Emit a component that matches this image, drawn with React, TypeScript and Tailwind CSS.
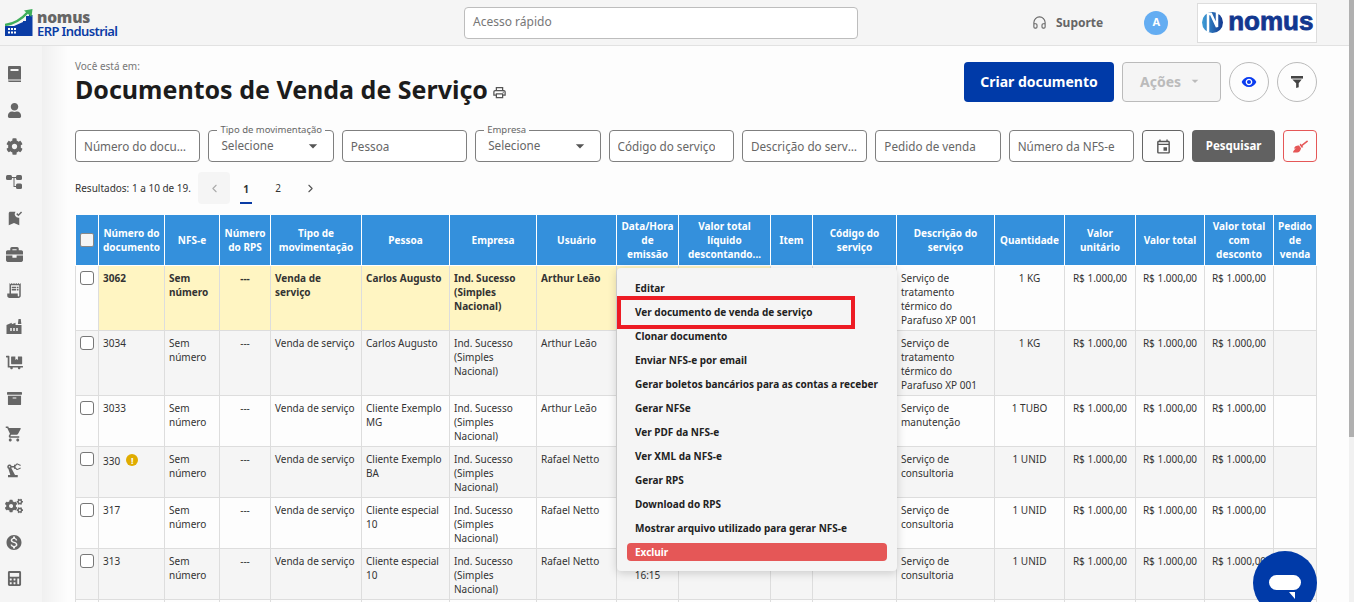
import { ChevronLeft, ChevronRight, Headphones } from 'lucide-react';
import {
  FaArchive, FaBriefcase, FaBroom, FaCalculator, FaCog, FaCogs, FaDollyFlatbed, FaUser,
} from 'react-icons/fa';
import {
  MdArrowDropDown, MdBookmarkAdded, MdFactory, MdMonetizationOn, MdOutlineEvent, MdOutlinePrint,
  MdPrecisionManufacturing, MdReceiptLong, MdShoppingCart, MdVisibility,
} from 'react-icons/md';

function BookIcon() {
  return (
    <svg width="13" height="17" viewBox="0 0 13 17" fill="currentColor">
      <path d="M1 0h11a1 1 0 0 1 1 1v12.500H0V1a1 1 0 0 1 1-1z" />
      <rect x="2.500" y="3" width="8" height="2" fill="#f5f5f5" />
      <path d="M0 14.500h13V16H1.500A1.500 1.500 0 0 1 0 14.500z" />
    </svg>
  );
}

function TreeIcon() {
  return (
    <svg width="16" height="14" viewBox="0 0 16 14" fill="currentColor">
      <rect x="0" y="0" width="6" height="5" rx="1.500" />
      <rect x="10" y="0" width="6" height="5" rx="1.500" />
      <rect x="10" y="8.500" width="6" height="5.500" rx="1.500" />
      <path d="M5 2h6v1H8.500v8H11v1H7.500V3H5z" />
    </svg>
  );
}

const sideIcons = [
  <BookIcon key="a" />, <FaUser key="b" size={15} />, <FaCog key="c" size={17} />,
  <TreeIcon key="d" />, <MdBookmarkAdded key="e" size={19} />,
  <FaBriefcase key="f" size={17} />, <MdReceiptLong key="g" size={19} />, <MdFactory key="h" size={19} />,
  <FaDollyFlatbed key="i" size={17} />, <FaArchive key="j" size={15} />, <MdShoppingCart key="k" size={20} />,
  <MdPrecisionManufacturing key="l" size={19} />, <FaCogs key="m" size={18} />, <MdMonetizationOn key="n" size={19} />,
  <FaCalculator key="o" size={15} />,
];

const widths = [24, 66, 55, 51, 91, 88, 87, 80, 62, 92, 42, 84, 98, 70, 71, 69, 69, 43];

const headers = [
  'Número do documento', 'NFS-e', 'Número do RPS', 'Tipo de movimentação', 'Pessoa', 'Empresa', 'Usuário',
  'Data/Hora de emissão', 'Valor total líquido descontando...', 'Item', 'Código do serviço', 'Descrição do serviço',
  'Quantidade', 'Valor unitário', 'Valor total', 'Valor total com desconto', 'Pedido de venda',
];

const tratamento = 'Serviço de tratamento térmico do Parafuso XP 001';

const rows = [
  { num: '3062', tipo: 'Venda de serviço', pessoa: 'Carlos Augusto', user: 'Arthur Leão', desc: tratamento, qtd: '1 KG', h: 'h-[65px]', hi: true },
  { num: '3034', tipo: 'Venda de serviço', pessoa: 'Carlos Augusto', user: 'Arthur Leão', desc: tratamento, qtd: '1 KG', h: 'h-[65px]' },
  { num: '3033', tipo: 'Venda de serviço', pessoa: 'Cliente Exemplo MG', user: 'Arthur Leão', desc: 'Serviço de manutenção', qtd: '1 TUBO', h: 'h-[51px]' },
  { num: '330', tipo: 'Venda de serviço', pessoa: 'Cliente Exemplo BA', user: 'Rafael Netto', desc: 'Serviço de consultoria', qtd: '1 UNID', h: 'h-[51px]', warn: true },
  { num: '317', tipo: 'Venda de serviço', pessoa: 'Cliente especial 10', user: 'Rafael Netto', desc: 'Serviço de consultoria', qtd: '1 UNID', h: 'h-[51px]' },
  { num: '313', tipo: 'Venda de serviço', pessoa: 'Cliente especial 10', user: 'Rafael Netto', desc: 'Serviço de consultoria', qtd: '1 UNID', h: 'h-[51px]', hora: '16:15' },
];

const menuItems = [
  'Editar', 'Ver documento de venda de serviço', 'Clonar documento', 'Enviar NFS-e por email',
  'Gerar boletos bancários para as contas a receber', 'Gerar NFSe', 'Ver PDF da NFS-e', 'Ver XML da NFS-e',
  'Gerar RPS', 'Download do RPS', 'Mostrar arquivo utilizado para gerar NFS-e',
];

function Field({ text }: { text: string }) {
  return (
    <div className="flex h-8 w-[125.4px] shrink-0 items-center rounded border border-[#7f7f7f] bg-white px-2 pt-px text-[11.7px] text-[#666]">
      <span className="truncate">{text}</span>
    </div>
  );
}

function SelectField({ label }: { label: string }) {
  return (
    <div className="relative flex h-8 w-[125.4px] shrink-0 items-center justify-between rounded border border-[#7f7f7f] bg-white pr-[10px] pl-[12px] text-[11.7px] text-[#666]">
      <span className="absolute -top-[7px] left-[8px] bg-[#fdfdfd] px-[3px] text-[9.5px] leading-[12px]">{label}</span>
      <span>Selecione</span>
      <MdArrowDropDown size={20} className="text-[#555]" />
    </div>
  );
}

function Cell({ children, bg, bold, center }: { children?: React.ReactNode; bg: string; bold?: boolean; center?: boolean }) {
  return (
    <td className={`border-r border-b border-[#dddddd] px-[4px] pt-[5px] align-top leading-[14px] ${bg} ${bold ? 'font-bold' : ''} ${center ? 'text-center' : ''}`}>
      {children}
    </td>
  );
}

export default function App() {
  return (
    <div className="flex h-[602px] w-[1354px] overflow-hidden bg-[#fdfdfd] font-['Noto_Sans',sans-serif] text-[#333]">
      <div className="relative w-[1349px] shrink-0">
        <header className="flex h-[46px] items-center border-b border-[#e2e2e2] bg-[#f5f5f5]">
          <div className="flex w-[464px] items-center pl-[5px]">
            <svg width="28" height="28" viewBox="0 0 28 28">
              <path d="M0 17h9l9-4v-1h3V7h3v-1h3.500v21H0z" fill="#0a3ca5" />
              <path d="M0 16C9 15 16 11 23 3" fill="none" stroke="#3fae5a" strokeWidth="2.500" />
              <path d="M19 1.500L27.500 0 26.500 8z" fill="#3fae5a" />
              <g fill="#fff">
                <rect x="3" y="19" width="2" height="2" /><rect x="6" y="19" width="2" height="2" /><rect x="9" y="19" width="2" height="2" />
                <rect x="3" y="22.500" width="2" height="2" /><rect x="6" y="22.500" width="2" height="2" /><rect x="9" y="22.500" width="2" height="2" />
              </g>
            </svg>
            <div className="mt-[2px] ml-[4px] flex flex-col">
              <span className="text-[15.5px] leading-[14px] font-black tracking-[-0.2px] text-[#666]">nomus</span>
              <span className="text-[13px] leading-[14px] font-semibold tracking-[-0.6px] text-[#0a3ca5]">ERP Industrial</span>
            </div>
          </div>
          <div className="flex h-8 w-[394px] items-center rounded border border-[#bdbdbd] bg-white px-[8px] pb-px text-[12px] text-[#777]">Acesso rápido</div>
          <div className="ml-[174px] flex items-center gap-[9px] text-[12px] font-bold text-[#666]">
            <Headphones size={15} strokeWidth={1.75} />
            <span>Suporte</span>
          </div>
          <div className="ml-[41px] flex h-6 w-6 items-center justify-center rounded-full bg-[#64adf2] text-[11px] font-bold text-white">A</div>
          <div className="ml-[29px] flex h-10 w-[120px] items-center gap-[5px] border border-[#dddddd] bg-white pl-[4px]">
            <svg width="21" height="21" viewBox="0 0 21 21">
              <defs>
                <linearGradient id="nomusMark" x1="0" x2="1" y1="0" y2="0">
                  <stop offset="0" stopColor="#3f9fd8" />
                  <stop offset="1" stopColor="#12378f" />
                </linearGradient>
              </defs>
              <circle cx="10.500" cy="10.500" r="10.500" fill="url(#nomusMark)" />
              <path d="M6 20V2h3l6 13V1h3" fill="none" stroke="#fff" strokeWidth="2.500" />
            </svg>
            <span className="-mt-[3px] font-['Liberation_Sans',sans-serif] text-[26px] leading-none font-bold text-[#12378f] [-webkit-text-stroke:0.8px_#12378f]">nomus</span>
          </div>
        </header>

        <div className="flex h-[556px]">
          <aside className="flex w-[42px] shrink-0 flex-col items-center gap-[18px] bg-[#f5f5f5] pt-[19px] pr-[14px] text-[#666]">
            {sideIcons.map((icon, i) => (
              <div key={i} className="flex h-[18px] w-[18px] shrink-0 items-center justify-center">{icon}</div>
            ))}
          </aside>

          <main className="min-w-0 flex-1 bg-[linear-gradient(to_right,#f0f0f0,#fdfdfd_26px)] pt-[14px] pr-[32px] pl-[33px]">
            <div className="flex h-[42px] items-start justify-between">
              <div>
                <div className="text-[10px] leading-[12px] text-[#777]">Você está em:</div>
                <div className="flex items-center gap-[4px]">
                  <h1 className="text-[25px] leading-[34px] font-bold text-[#1c1c1c]">Documentos de Venda de Serviço</h1>
                  <MdOutlinePrint size={15} className="mt-[7px] text-[#555]" />
                </div>
              </div>
              <div className="mt-[2px] flex gap-2">
                <button className="h-10 w-[150px] rounded bg-[#003aa8] pb-[2px] text-[14px] font-bold text-white">Criar documento</button>
                <button className="flex h-10 w-[99px] items-center justify-center gap-[6px] rounded border border-[#bbbbbb] bg-[#f5f5f5] pb-[2px] text-[14px] font-bold text-[#bbbbbb]">
                  Ações <MdArrowDropDown size={16} />
                </button>
                <button className="flex h-10 w-10 items-center justify-center rounded-full border border-[#bbbbbb] text-[#0a3cf0]"><MdVisibility size={16} /></button>
                <button className="flex h-10 w-10 items-center justify-center rounded-full border border-[#bbbbbb] text-[#444]">
                  <svg width="12" height="12" viewBox="0 0 14 14" fill="currentColor">
                    <rect x="0" y="0" width="14" height="3" />
                    <path d="M1.500 4h11L9 8.500V13l-3 1V8.500z" />
                  </svg>
                </button>
              </div>
            </div>

            <div className="mt-[28px] flex gap-2">
              <Field text="Número do documento" />
              <SelectField label="Tipo de movimentação" />
              <Field text="Pessoa" />
              <SelectField label="Empresa" />
              <Field text="Código do serviço" />
              <Field text="Descrição do serviço" />
              <Field text="Pedido de venda" />
              <Field text="Número da NFS-e" />
              <button className="flex h-8 w-[42px] shrink-0 items-center justify-center rounded border border-[#666] text-[#555]"><MdOutlineEvent size={17} /></button>
              <button className="h-8 w-[83px] shrink-0 rounded bg-[#616161] text-[11.500px] font-bold text-white">Pesquisar</button>
              <button className="flex h-8 w-[34px] shrink-0 items-center justify-center rounded border border-[#e55757] text-[#e55757]"><FaBroom size={15} /></button>
            </div>

            <div className="mt-[10px] flex h-8 items-center text-[10px] text-[#333]">
              <span className="w-[123px] pt-[1px]">Resultados: 1 a 10 de 19.</span>
              <div className="flex h-8 w-8 items-center justify-center rounded bg-[#f5f5f5] text-[#aaa]"><ChevronLeft size={13} /></div>
              <div className="flex h-8 w-8 items-center justify-center">
                <span className="mt-[2px] flex h-[30px] w-3 items-center justify-center border-b-2 border-[#0a3ca5] pt-[2px] font-bold">1</span>
              </div>
              <div className="flex h-8 w-8 items-center justify-center pt-[1px]">2</div>
              <div className="flex h-8 w-8 items-center justify-center text-[#555]"><ChevronRight size={13} /></div>
            </div>

            <div className="relative mt-[11px]">
              <table className="w-[1242px] table-fixed border-separate border-spacing-0 text-[10px]">
                <colgroup>
                  {widths.map((w, i) => <col key={i} style={{ width: w }} />)}
                </colgroup>
                <thead>
                  <tr>
                    <th className="h-[51px] border-r border-b border-l border-white bg-[#3490dc]">
                      <div className="ml-[4px] h-[14px] w-[14px] rounded-[2px] border border-[#888] bg-[#f5f5f5]" />
                    </th>
                    {headers.map((h) => (
                      <th key={h} className="border-r border-b border-white bg-[#3490dc] px-[3px] text-center leading-[14px] font-bold text-white">{h}</th>
                    ))}
                  </tr>
                </thead>
                <tbody>
                  {rows.map((r, i) => {
                    const rowBg = i % 2 === 1 ? 'bg-[#f5f5f5]' : 'bg-[#fdfdfd]';
                    const bg = r.hi ? 'bg-[#fff5c2]' : rowBg;
                    return (
                      <tr key={r.num}>
                        <td className={`border-r border-b border-l border-[#dddddd] pt-[5px] align-top ${rowBg} ${r.h}`}>
                          <div className="ml-[4px] h-[14px] w-[14px] rounded-[3px] border border-[#777] bg-white" />
                        </td>
                        <Cell bg={bg} bold={r.hi}>
                          {r.warn ? (
                            <span className="flex items-center gap-[6px]">
                              <span className="mt-[2px]">{r.num}</span>
                              <span className="flex h-3 w-3 items-center justify-center rounded-full bg-[#e0ac00] text-[9px] leading-none font-bold text-white">!</span>
                            </span>
                          ) : r.num}
                        </Cell>
                        <Cell bg={bg} bold={r.hi}>Sem número</Cell>
                        <Cell bg={bg} bold={r.hi} center>---</Cell>
                        <Cell bg={bg} bold={r.hi}>{r.tipo}</Cell>
                        <Cell bg={bg} bold={r.hi}>{r.pessoa}</Cell>
                        <Cell bg={bg} bold={r.hi}>Ind. Sucesso (Simples Nacional)</Cell>
                        <Cell bg={bg} bold={r.hi}>{r.user}</Cell>
                        <Cell bg={bg} center>{r.hora ? <><br />{r.hora}</> : null}</Cell>
                        <Cell bg={bg} />
                        <Cell bg={rowBg} />
                        <Cell bg={rowBg} />
                        <Cell bg={rowBg}>{r.desc}</Cell>
                        <Cell bg={rowBg} center>{r.qtd}</Cell>
                        <Cell bg={rowBg} center>R$ 1.000,00</Cell>
                        <Cell bg={rowBg} center>R$ 1.000,00</Cell>
                        <Cell bg={rowBg} center>R$ 1.000,00</Cell>
                        <Cell bg={rowBg} />
                      </tr>
                    );
                  })}
                  <tr>
                    <td className="h-[51px] border-r border-l border-[#dddddd]" />
                    {headers.map((h) => <td key={h} className="border-r border-[#dddddd]" />)}
                  </tr>
                </tbody>
              </table>

              <div className="absolute top-[53px] left-[542px] w-[280px] rounded bg-[#f5f5f5] pt-[8px] pb-[10px] shadow-[0_2px_10px_rgba(0,0,0,0.18)]">
                {menuItems.map((item) => (
                  <div key={item} className="flex h-6 items-center pt-[1px] pl-[18px] text-[10px] font-bold text-[#222]">{item}</div>
                ))}
                <div className="mx-[10px] mt-[3px] flex h-[18px] items-center rounded bg-[#e55757] pt-[1px] pl-[8px] text-[10px] font-bold text-white">Excluir</div>
                <div className="absolute top-[28px] left-0 h-[33px] w-[238px] border-[4px] border-[#ed1c24]" />
              </div>
            </div>
          </main>
        </div>

        <div className="absolute top-[551px] left-[1253px] flex h-16 w-16 items-center justify-center rounded-full bg-[#003aa8]">
          <div className="relative -mt-[2px] h-[15px] w-8 rounded-full bg-white">
            <div className="absolute top-[17px] right-[6px] h-0 w-0 border-t-[7px] border-l-[6px] border-t-white border-l-transparent" />
          </div>
        </div>
      </div>

      <div className="h-full w-[5px] bg-[#f1f1f1]">
        <div className="h-[437px] bg-[#b0b0b0]" />
      </div>
    </div>
  );
}
